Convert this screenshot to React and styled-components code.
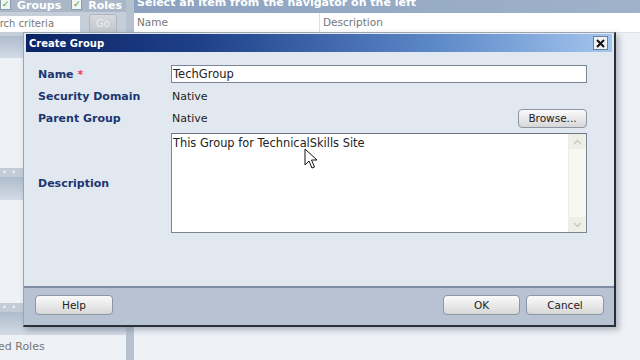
import React from "react"
import styled, { createGlobalStyle } from "styled-components"

const Global = createGlobalStyle`
  html, body { margin: 0; padding: 0; }
  body { font-family: "DejaVu Sans", Verdana, sans-serif; }
  #root { width: 640px; height: 360px; }
`

const Page = styled.div`
  position: relative;
  width: 640px;
  height: 360px;
  overflow: hidden;
  display: flex;
  background: #eef1f6;
`

/* ---------- background app ---------- */
const LeftPanel = styled.div`
  width: 126px;
  display: flex;
  flex-direction: column;
  overflow: hidden;
  background: #c3ccd8;
`
const FilterRow = styled.div`
  height: 12px;
  display: flex;
  align-items: flex-end;
  gap: 6px;
  background: #aab7c8;
  overflow: hidden;
  flex-shrink: 0;
`
const Check = styled.span`
  width: 9px;
  height: 9px;
  margin-bottom: 2px;
  margin-left: ${({ gap }) => gap || 0}px;
  background: #f2f6f0;
  border: 1px solid #8b9aad;
  color: #3c9a3c;
  font-size: 9px;
  line-height: 9px;
  font-weight: bold;
  text-align: center;
  flex-shrink: 0;
`
const FilterLabel = styled.span`
  color: #fff;
  font-weight: bold;
  font-size: 11px;
  line-height: 11px;
  margin-bottom: 1px;
`
const SearchRow = styled.div`
  height: 24px;
  display: flex;
  align-items: center;
  gap: 9px;
  background: #c5ced9;
  flex-shrink: 0;
`
const SearchBox = styled.div`
  width: 101px;
  height: 16px;
  margin-left: -21px;
  background: #fff;
  color: #777;
  font-size: 10px;
  line-height: 16px;
  padding-left: 2px;
  box-sizing: border-box;
  white-space: nowrap;
`
const GoButton = styled.div`
  width: 28px;
  height: 20px;
  border-radius: 3px;
  border: 1px solid #b0b6c0;
  background: linear-gradient(#d6d9de, #c2c6cc);
  color: #eceef1;
  font-size: 10px;
  line-height: 18px;
  text-align: center;
  box-sizing: border-box;
`
const SectionHeader = styled.div`
  height: ${({ h }) => h || 22}px;
  background: linear-gradient(#aebccd, #d3dbe5);
  flex-shrink: 0;
`
const DotsBar = styled.div`
  height: 9px;
  background: #c4ccd6;
  color: #eef1f5;
  font-size: 8px;
  line-height: 9px;
  padding-left: 2px;
  letter-spacing: 1px;
  flex-shrink: 0;
`
const SectionBody = styled.div`
  height: ${({ h }) => h}px;
  flex-shrink: 0;
  background: #eef1f5;
  color: #777;
  font-size: 11px;
  white-space: nowrap;
  padding-top: ${({ pt }) => pt || 0}px;
  margin-left: ${({ shift }) => shift || 0}px;
  box-sizing: border-box;
`
const Splitter = styled.div`
  width: 8px;
  background: #b7c2d0;
`
const RightPanel = styled.div`
  flex: 1;
  display: flex;
  flex-direction: column;
`
const RightHeader = styled.div`
  height: 13px;
  background: linear-gradient(to right, #8ca2bf, #9fb2ca);
  color: #fff;
  font-weight: bold;
  font-size: 11px;
  line-height: 6px;
  padding-left: 3px;
  overflow: hidden;
  white-space: nowrap;
`
const ColumnRow = styled.div`
  height: 19px;
  display: grid;
  grid-template-columns: 186px 1fr;
  background: #fff;
  color: #777;
  font-size: 10.5px;
  line-height: 19px;
  border-bottom: 1px solid #e0e4ea;
`
const ColumnCell = styled.div`
  padding-left: 3px;
  border-right: ${({ last }) => (last ? "none" : "1px solid #dde2e8")};
`

/* ---------- dialog ---------- */
const Dialog = styled.div`
  position: absolute;
  left: 23px;
  top: 32px;
  width: 593px;
  height: 295px;
  box-sizing: border-box;
  border: 1px solid #9aa4b2;
  border-right: 2px solid #2b2f36;
  border-bottom: 2px solid #2b2f36;
  box-shadow: 3px 3px 6px rgba(60, 70, 90, 0.35);
  background: #e2e8f0;
  display: flex;
  flex-direction: column;
  padding: 1px 2px 0 2px;
`
const TitleBar = styled.div`
  height: 18px;
  flex-shrink: 0;
  display: flex;
  align-items: center;
  justify-content: space-between;
  padding: 0 4px 0 3px;
  background: linear-gradient(to right, #0b2364 0%, #1f418a 30%, #5d89c8 70%, #a4c5ee 100%);
`
const Title = styled.span`
  color: #fff;
  font-weight: bold;
  font-size: 10px;
`
const CloseButton = styled.div`
  width: 15px;
  height: 14px;
  box-sizing: border-box;
  border: 1px solid #6f7f96;
  background: #eef1f5;
  display: flex;
  align-items: center;
  justify-content: center;
`
const Body = styled.div`
  flex: 1;
  display: grid;
  grid-template-columns: 133px 416px;
  grid-auto-rows: min-content;
  padding: 13px 0 0 12px;
  align-items: center;
`
const Label = styled.div`
  color: #1d3670;
  font-weight: bold;
  font-size: 11px;
  height: ${({ h }) => h}px;
  margin-top: ${({ mt }) => mt || 0}px;
  display: flex;
  align-items: center;
`
const Star = styled.span`
  color: #e24848;
  margin-left: 4px;
`
const Value = styled.div`
  height: ${({ h }) => h}px;
  display: flex;
  align-items: center;
  justify-content: space-between;
  font-size: 11px;
  color: #222;
  padding-left: 1px;
`
const TextInput = styled.div`
  width: 416px;
  height: 18px;
  box-sizing: border-box;
  border: 1px solid #7b8594;
  background: #fff;
  font-size: 11.5px;
  line-height: 16px;
  padding-left: 1px;
  color: #222;
`
const TextArea = styled.div`
  width: 416px;
  height: 100px;
  margin-top: 6px;
  box-sizing: border-box;
  border: 1px solid #7b8594;
  border-top-color: #6d7684;
  background: #fff;
  display: flex;
`
const AreaText = styled.div`
  flex: 1;
  font-size: 11.4px;
  color: #222;
  padding: 2px 1px;
`
const Scroll = styled.div`
  width: 17px;
  background: #f8f8f2;
  border-left: 1px solid #eceee6;
  display: flex;
  flex-direction: column;
  justify-content: space-between;
`
const ScrollArrow = styled.div`
  height: 15px;
  background: #efefe8;
  display: flex;
  align-items: center;
  justify-content: center;
`
const Footer = styled.div`
  height: 39px;
  box-sizing: border-box;
  flex-shrink: 0;
  border-top: 2px solid #7e8da2;
  background: #b7c3d3;
  margin: 0 -2px;
  display: flex;
  align-items: flex-start;
  padding: 7px 10px 0 11px;
  gap: 6px;
`
const Button = styled.div`
  width: ${({ w }) => w || 78}px;
  height: ${({ h }) => h || 20}px;
  box-sizing: border-box;
  border: 1px solid #8d96a3;
  border-radius: 4px;
  background: linear-gradient(#fafafa, #e6e6e6 60%, #d6d6d6);
  font-size: 10.5px;
  line-height: ${({ h }) => (h || 20) - 2}px;
  text-align: center;
  color: #222;
  margin-left: ${({ push }) => (push ? "auto" : "0")};
`
const Cursor = styled.svg`
  position: absolute;
  left: 304px;
  top: 148px;
`

function Chevron({ up }) {
  return (
    <svg width="9" height="6" viewBox="0 0 9 6">
      <path d={up ? "M1 5 L4.5 1.5 L8 5" : "M1 1 L4.5 4.5 L8 1"} fill="none" stroke="#c6c8c0" strokeWidth="1.3" />
    </svg>
  )
}

export default function App() {
  return (
    <Page>
      <Global />
      <LeftPanel>
        <FilterRow>
          <Check>✓</Check>
          <FilterLabel>Groups</FilterLabel>
          <Check gap={4}>✓</Check>
          <FilterLabel>Roles</FilterLabel>
        </FilterRow>
        <SearchRow>
          <SearchBox>Search criteria</SearchBox>
          <GoButton>Go</GoButton>
        </SearchRow>
        <SectionHeader h={22} />
        <SectionBody h={110} />
        <DotsBar>• •</DotsBar>
        <SectionHeader h={23} />
        <SectionBody h={103} />
        <DotsBar>• •</DotsBar>
        <SectionHeader h={23} />
        <SectionBody h={25} pt={5} shift={-38}>
          Assigned Roles
        </SectionBody>
      </LeftPanel>
      <Splitter />
      <RightPanel>
        <RightHeader>Select an item from the navigator on the left</RightHeader>
        <ColumnRow>
          <ColumnCell>Name</ColumnCell>
          <ColumnCell last>Description</ColumnCell>
        </ColumnRow>
      </RightPanel>

      <Dialog>
        <TitleBar>
          <Title>Create Group</Title>
          <CloseButton>
            <svg width="9" height="9" viewBox="0 0 9 9">
              <path d="M1 1 L8 8 M8 1 L1 8" stroke="#111" strokeWidth="2" />
            </svg>
          </CloseButton>
        </TitleBar>
        <Body>
          <Label h={18}>
            Name<Star>*</Star>
          </Label>
          <TextInput>TechGroup</TextInput>
          <Label h={27}>Security Domain</Label>
          <Value h={27}>Native</Value>
          <Label h={17}>Parent Group</Label>
          <Value h={17}>
            Native
            <Button w={69} h={19}>Browse...</Button>
          </Value>
          <Label h={100} mt={6}>Description</Label>
          <TextArea>
            <AreaText>This Group for TechnicalSkills Site</AreaText>
            <Scroll>
              <ScrollArrow><Chevron up /></ScrollArrow>
              <ScrollArrow><Chevron /></ScrollArrow>
            </Scroll>
          </TextArea>
        </Body>
        <Footer>
          <Button>Help</Button>
          <Button push w={77}>OK</Button>
          <Button>Cancel</Button>
        </Footer>
      </Dialog>

      <Cursor width="14" height="22" viewBox="0 0 14 22">
        <path d="M1 1 L1 17 L5 13 L8 20 L10.5 19 L7.5 12 L13 12 Z" fill="#fff" stroke="#111" strokeWidth="1" strokeLinejoin="round" />
      </Cursor>
    </Page>
  )
}
